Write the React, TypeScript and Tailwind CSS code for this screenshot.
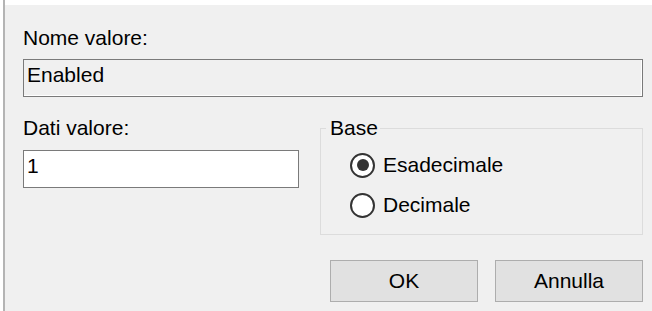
const Radio = ({ label, checked }: { label: string; checked?: boolean }) => (
  <label className="flex h-6 items-center gap-[8px]">
    <span className="flex h-[25px] w-[25px] shrink-0 items-center justify-center rounded-full border-2 border-[#333333] bg-white">
      {checked ? <span className="h-3 w-3 rounded-full bg-[#333333]" /> : null}
    </span>
    <span>{label}</span>
  </label>
);

export default function App() {
  return (
    <div className="flex h-[311px] w-[652px] bg-white pl-[3px] font-['Liberation_Sans',Arial,sans-serif] text-[21px] leading-6 text-black">
      <div className="flex flex-1 flex-col border-l-2 border-[#b4b4b4] pt-[5px]">
        <div className="flex flex-1 flex-col bg-[#f0f0f0] pl-[18px] pr-[9px] pt-[21px]">
          <div className="h-6">Nome valore:</div>
          <div className="mt-[9px] h-[38px] border border-[#7a7a7a] pl-[3px] pt-[3px] shadow-[inset_-1px_-1px_0_#ffffff]">
            Enabled
          </div>

          <div className="mt-[19px] flex items-start gap-[21px]">
            <div className="flex w-[276px] flex-col">
              <div className="h-6">Dati valore:</div>
              <div className="mt-[10px] h-[38px] border border-[#7a7a7a] bg-white pl-[3px] pt-[3px]">1</div>
            </div>

            <fieldset className="flex-1 border border-[#dcdcdc] pb-[17px] pl-[29px] pt-[13px]">
              <legend className="-ml-[24px] pl-[4px] pr-[2px]">Base</legend>
              <div className="flex flex-col gap-4">
                <Radio label="Esadecimale" checked />
                <Radio label="Decimale" />
              </div>
            </fieldset>
          </div>

          <div className="mt-[25px] flex justify-end gap-[17px]">
            <button className="h-[42px] w-[148px] border border-[#adadad] bg-[#e1e1e1]">OK</button>
            <button className="h-[42px] w-[148px] border border-[#adadad] bg-[#e1e1e1]">Annulla</button>
          </div>
        </div>
      </div>
    </div>
  );
}
